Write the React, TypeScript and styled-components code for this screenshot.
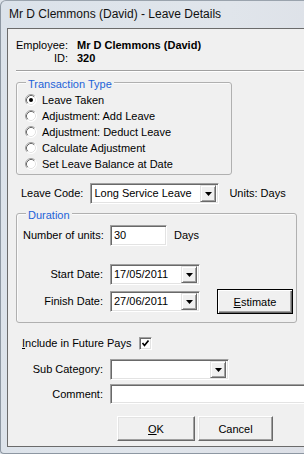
import React from 'react';
import styled, { createGlobalStyle } from 'styled-components';

const Global = createGlobalStyle`
  html, body { margin: 0; padding: 0; background: #dde3ea; }
  body { font-family: "Liberation Sans", Arial, sans-serif; }
  * { box-sizing: border-box; }
`;

const Frame = styled.div`
  width: 304px;
  height: 454px;
  overflow: hidden;
  display: flex;
  flex-direction: column;
  background: linear-gradient(100deg, #dbe2ea 0%, #e0e5eb 60%, #dcdfe6 100%);
  border-left: 1px solid #8d97a2;
  border-top: 1px solid #9aa3ad;
  border-bottom: 1px solid #8d97a2;
  border-top-left-radius: 6px;
  border-bottom-left-radius: 4px;
`;

const TitleBar = styled.div`
  height: 27px;
  flex: none;
  padding-left: 8px;
  font-family: "Liberation Sans", Arial, sans-serif;
  font-size: 12px;
  line-height: 27px;
  color: #111;
  white-space: nowrap;
`;

const Client = styled.div`
  flex: none;
  height: 419px;
  width: 330px;
  margin-left: 6px;
  border: 1px solid #6b6b6b;
  border-right: none;
  background: #f0f0f0;
  padding-left: 8px;
  font-size: 11px;
  line-height: 13px;
  color: #000;
  display: flex;
  flex-direction: column;
`;

const InfoGrid = styled.div`
  margin-top: 10px;
  display: grid;
  grid-template-columns: auto auto;
  justify-content: start;
  column-gap: 9px;
`;

const InfoLabel = styled.span`
  text-align: right;
`;

const InfoValue = styled.span`
  font-weight: bold;
`;

const Separator = styled.div`
  margin-top: 5px;
  height: 2px;
  width: 300px;
  border-top: 1px solid #a0a0a0;
  border-bottom: 1px solid #ffffff;
`;

const Group = styled.div<{ $w: number; $mt: number }>`
  position: relative;
  width: ${p => p.$w}px;
  margin-top: ${p => p.$mt}px;
  border: 1px solid #b0b0b0;
  border-radius: 3px;
  box-shadow: inset 1px 1px 0 #fbfbfb;
`;

const Legend = styled.span`
  position: absolute;
  top: -5px;
  left: 9px;
  padding: 0 2px;
  background: #f0f0f0;
  color: #1d63d8;
`;

const RadioList = styled.div`
  padding: 9px 0 2px 8px;
  display: flex;
  flex-direction: column;
`;

const RadioRow = styled.div`
  height: 16px;
  display: flex;
  align-items: center;
  gap: 5px;
`;

const Row = styled.div<{ $mt: number; $ml?: number; $h?: number }>`
  display: flex;
  align-items: center;
  margin-top: ${p => p.$mt}px;
  margin-left: ${p => p.$ml ?? 0}px;
  height: ${p => p.$h ?? 21}px;
`;

const Label = styled.span<{ $gap?: number; $lead?: number }>`
  margin-right: ${p => p.$gap ?? 0}px;
  margin-left: ${p => p.$lead ?? 0}px;
  white-space: nowrap;
`;

const FormGrid = styled.div<{ $pt: number; $pl: number; $pb: number; $col: number }>`
  display: grid;
  grid-template-columns: ${p => p.$col}px auto;
  column-gap: 7px;
  align-items: center;
  justify-content: start;
  padding: ${p => p.$pt}px 0 ${p => p.$pb}px ${p => p.$pl}px;
`;

const GridLabel = styled.span<{ $mt?: number }>`
  text-align: right;
  white-space: nowrap;
  margin-top: ${p => p.$mt ?? 0}px;
`;

const Cell = styled.div<{ $mt?: number; $h?: number }>`
  display: flex;
  align-items: center;
  margin-top: ${p => p.$mt ?? 0}px;
  height: ${p => p.$h ?? 21}px;
`;

const Sunken = styled.div<{ $w: number; $h?: number }>`
  width: ${p => p.$w}px;
  height: ${p => p.$h ?? 21}px;
  background: #fff;
  border: 1px solid;
  border-color: #a0a0a0 #ffffff #ffffff #a0a0a0;
  box-shadow: inset 1px 1px 0 #696969, inset -1px -1px 0 #e3e3e3;
  display: flex;
  align-items: center;
  padding: 2px 2px 2px 3px;
  white-space: nowrap;
`;

const BoxText = styled.span`
  flex: 1;
  overflow: hidden;
`;

const DropBtn = styled.span`
  width: 16px;
  height: 17px;
  flex: none;
  background: #f0f0f0;
  border: 1px solid;
  border-color: #e3e3e3 #696969 #696969 #e3e3e3;
  box-shadow: inset 1px 1px 0 #fff, inset -1px -1px 0 #a0a0a0;
  display: flex;
  align-items: center;
  justify-content: center;
`;

const Button = styled.button<{ $w: number; $def?: boolean; $ml?: number }>`
  width: ${p => p.$w}px;
  height: 25px;
  margin-left: ${p => p.$ml ?? 0}px;
  padding: 0;
  background: #f0f0f0;
  font-family: "Liberation Sans", Arial, sans-serif;
  font-size: 11px;
  color: #000;
  border: 1px solid;
  border-color: ${p => (p.$def ? '#000' : '#fff #696969 #696969 #fff')};
  box-shadow: ${p =>
    p.$def
      ? 'inset 1px 1px 0 #fff, inset -1px -1px 0 #696969, inset -2px -2px 0 #a0a0a0'
      : 'inset -1px -1px 0 #a0a0a0, inset 1px 1px 0 #e3e3e3'};
`;

const Buttons = styled.div`
  display: flex;
  margin-top: 12px;
  margin-left: 101px;
  gap: 3px;
`;

const CheckBox = styled.span`
  width: 13px;
  height: 13px;
  background: #fff;
  border: 1px solid;
  border-color: #a0a0a0 #ffffff #ffffff #a0a0a0;
  box-shadow: inset 1px 1px 0 #696969, inset -1px -1px 0 #e3e3e3;
  display: flex;
  align-items: center;
  justify-content: center;
`;

const Arrow = () => (
  <svg width="7" height="4" viewBox="0 0 7 4">
    <polygon points="0,0 7,0 3.5,4" fill="#000" />
  </svg>
);

const Radio = ({ checked }: { checked?: boolean }) => (
  <svg width="12" height="12" viewBox="0 0 12 12">
    <circle cx="6" cy="6" r="5.5" fill="#fff" />
    <path d="M2.11 9.89 A5.5 5.5 0 0 1 9.89 2.11" stroke="#a0a0a0" fill="none" />
    <path d="M9.89 2.11 A5.5 5.5 0 0 1 2.11 9.89" stroke="#ffffff" fill="none" />
    <path d="M2.82 9.18 A4.5 4.5 0 0 1 9.18 2.82" stroke="#696969" fill="none" />
    <path d="M9.18 2.82 A4.5 4.5 0 0 1 2.82 9.18" stroke="#e3e3e3" fill="none" />
    {checked && <circle cx="6" cy="6" r="2" fill="#000" />}
  </svg>
);

const Check = () => (
  <svg width="9" height="9" viewBox="0 0 9 9">
    <polyline points="1.5,4 3.5,6.5 7.5,1.5" fill="none" stroke="#000" strokeWidth="1.7" />
  </svg>
);

const U = styled.span`
  text-decoration: underline;
`;

const transactions = [
  'Leave Taken',
  'Adjustment: Add Leave',
  'Adjustment: Deduct Leave',
  'Calculate Adjustment',
  'Set Leave Balance at Date',
];

export default function App() {
  return (
    <>
      <Global />
      <Frame>
        <TitleBar>Mr D Clemmons (David) - Leave Details</TitleBar>
        <Client>
          <InfoGrid>
            <InfoLabel>Employee:</InfoLabel>
            <InfoValue>Mr D Clemmons (David)</InfoValue>
            <InfoLabel>ID:</InfoLabel>
            <InfoValue>320</InfoValue>
          </InfoGrid>
          <Separator />
          <Group $w={216} $mt={10}>
            <Legend>Transaction Type</Legend>
            <RadioList>
              {transactions.map((t, i) => (
                <RadioRow key={t}>
                  <Radio checked={i === 0} />
                  <span>{t}</span>
                </RadioRow>
              ))}
            </RadioList>
          </Group>
          <Row $mt={8} $ml={5}>
            <Label $gap={7}>Leave Code:</Label>
            <Sunken $w={129}>
              <BoxText>Long Service Leave</BoxText>
              <DropBtn><Arrow /></DropBtn>
            </Sunken>
            <Label $lead={10}>Units: Days</Label>
          </Row>
          <Group $w={281} $mt={9}>
            <Legend>Duration</Legend>
            <FormGrid $pt={11} $pl={6} $pb={8} $col={80}>
              <GridLabel>Number of units:</GridLabel>
              <Cell>
                <Sunken $w={57}>
                  <BoxText>30</BoxText>
                </Sunken>
                <Label $lead={7}>Days</Label>
              </Cell>
              <GridLabel $mt={18}>Start Date:</GridLabel>
              <Cell $mt={18}>
                <Sunken $w={90}>
                  <BoxText>17/05/2011</BoxText>
                  <DropBtn><Arrow /></DropBtn>
                </Sunken>
              </Cell>
              <GridLabel $mt={4}>Finish Date:</GridLabel>
              <Cell $mt={4} $h={25}>
                <Sunken $w={90}>
                  <BoxText>27/06/2011</BoxText>
                  <DropBtn><Arrow /></DropBtn>
                </Sunken>
                <Button $w={76} $def $ml={17}>
                  <U>E</U>stimate
                </Button>
              </Cell>
            </FormGrid>
          </Group>
          <Row $mt={14} $ml={6} $h={13}>
            <Label $gap={8}>
              <U>I</U>nclude in Future Pays
            </Label>
            <CheckBox><Check /></CheckBox>
          </Row>
          <FormGrid $pt={9} $pl={0} $pb={0} $col={87}>
            <GridLabel>Sub Category:</GridLabel>
            <Cell>
              <Sunken $w={119}>
                <BoxText />
                <DropBtn><Arrow /></DropBtn>
              </Sunken>
            </Cell>
            <GridLabel $mt={4}>Comment:</GridLabel>
            <Cell $mt={4} $h={20}>
              <Sunken $w={240} $h={20} />
            </Cell>
          </FormGrid>
          <Buttons>
            <Button $w={78}>
              <U>O</U>K
            </Button>
            <Button $w={75}>Cancel</Button>
          </Buttons>
        </Client>
      </Frame>
    </>
  );
}
